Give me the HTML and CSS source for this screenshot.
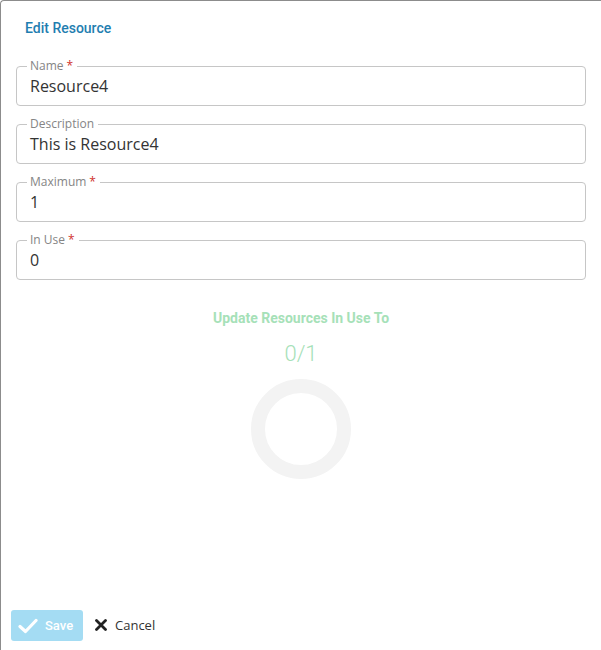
FILE: index.html
```html
<!DOCTYPE html>
<html>
<head>
<meta charset="utf-8">
<link rel="stylesheet" href="styles.css">
</head>
<body>
<div class="dialog">
  <div class="title">Edit Resource</div>
  <div class="fields">
    <fieldset class="field">
      <legend>Name<span class="req">*</span></legend>
      <div class="value">Resource4</div>
    </fieldset>
    <fieldset class="field">
      <legend>Description</legend>
      <div class="value">This is Resource4</div>
    </fieldset>
    <fieldset class="field">
      <legend>Maximum<span class="req">*</span></legend>
      <div class="value">1</div>
    </fieldset>
    <fieldset class="field">
      <legend>In Use<span class="req">*</span></legend>
      <div class="value">0</div>
    </fieldset>
  </div>
  <div class="update">
    <div class="update-title">Update Resources In Use To</div>
    <div class="update-count">0/1</div>
    <div class="ring"></div>
  </div>
  <div class="footer">
    <button class="btn-save">
      <svg class="check" width="20" height="16" viewBox="0 0 20 16"><path d="M2 8.5 L7.5 13.5 L18 2.5" fill="none" stroke="#fff" stroke-width="3.2" stroke-linecap="round" stroke-linejoin="round"/></svg>
      <span>Save</span>
    </button>
    <button class="btn-cancel">
      <svg class="x" width="12" height="12" viewBox="0 0 12 12"><path d="M1.5 1.5 L10.5 10.5 M10.5 1.5 L1.5 10.5" stroke="#222" stroke-width="2.8" stroke-linecap="round"/></svg>
      <span>Cancel</span>
    </button>
  </div>
</div>
</body>
</html>
```
FILE: styles.css
```css
html, body {
  margin: 0;
  padding: 0;
  background: #fff;
}
.dialog {
  box-sizing: border-box;
  width: 601px;
  height: 650px;
  border-top: 1px solid #8c8c8c;
  border-left: 1px solid #8c8c8c;
  border-top-left-radius: 4px;
  display: flex;
  flex-direction: column;
  font-family: "Open Sans", sans-serif;
}
.title {
  font-family: Roboto, sans-serif;
  font-weight: 500;
  font-size: 14px;
  line-height: 20px;
  color: #1f7eb0;
  padding: 17px 0 0 24px;
}
.fields {
  display: flex;
  flex-direction: column;
  gap: 11px;
  padding: 21px 15px 0 15px;
}
.field {
  margin: 0;
  padding: 0 13px 8px 13px;
  border: 1px solid #c6c6c6;
  border-radius: 4px;
  min-width: 0;
}
.field legend {
  font-size: 12px;
  line-height: 14px;
  color: #858585;
  padding: 0 4px 0 3px;
  margin-left: -3px;
}
.req {
  color: #d0312d;
  margin-left: 3px;
}
.value {
  font-size: 16px;
  line-height: 22px;
  color: #333;
  margin-top: 2px;
}
.update {
  display: flex;
  flex-direction: column;
  align-items: center;
  padding-top: 29px;
}
.update-title {
  font-family: Roboto, sans-serif;
  font-weight: 700;
  font-size: 14px;
  line-height: 18px;
  color: #a6e1b8;
}
.update-count {
  font-family: Roboto, sans-serif;
  font-weight: 300;
  font-size: 22px;
  line-height: 26px;
  color: #a6e1b8;
  margin-top: 14px;
}
.ring {
  box-sizing: border-box;
  width: 100px;
  height: 100px;
  border-radius: 50%;
  border: 14px solid #f3f3f3;
  margin-top: 12px;
}
.footer {
  margin-top: auto;
  display: flex;
  align-items: center;
  gap: 10px;
  padding: 0 0 9px 10px;
}
.btn-save {
  display: flex;
  align-items: center;
  gap: 7px;
  box-sizing: border-box;
  width: 72px;
  height: 31px;
  padding: 0 0 0 7px;
  border: none;
  border-radius: 3px;
  background: #a4dcf3;
  color: #fff;
  font-family: Roboto, sans-serif;
  font-size: 13px;
  font-weight: 500;
}
.btn-cancel {
  display: flex;
  align-items: center;
  gap: 8px;
  border: none;
  background: none;
  padding: 0 0 2px 2px;
  font-family: "Open Sans", sans-serif;
  font-size: 13px;
  color: #333;
}
```
